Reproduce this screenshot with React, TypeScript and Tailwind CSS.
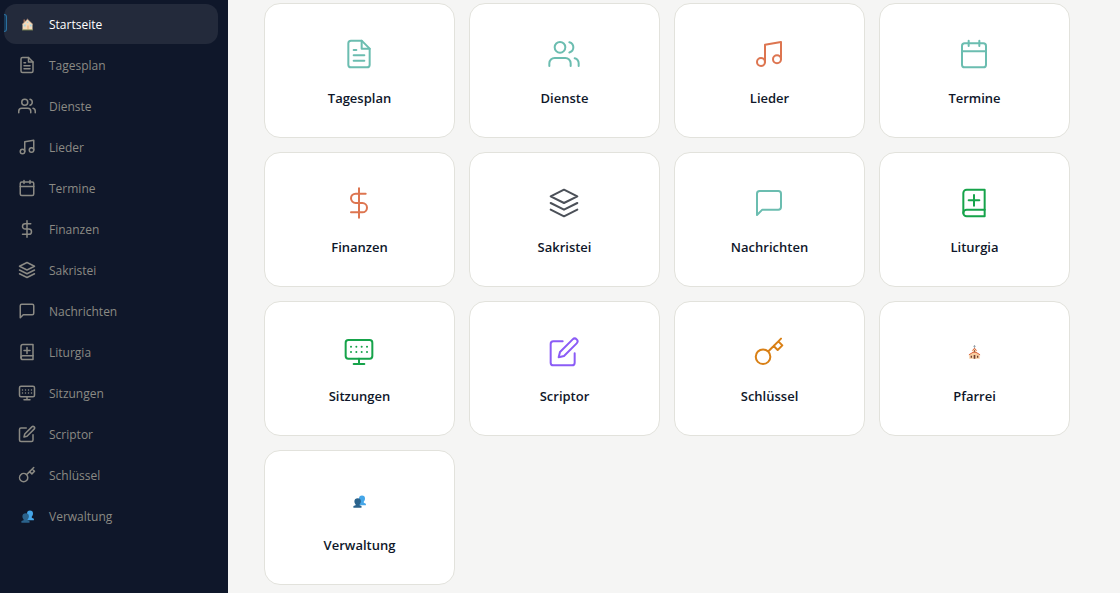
import type { ComponentType, ReactNode } from 'react';

type IconProps = { className?: string };

const Line = ({ className, children }: { className?: string; children: ReactNode }) => (
  <svg
    viewBox="0 0 24 24"
    fill="none"
    stroke="currentColor"
    strokeLinecap="round"
    strokeLinejoin="round"
    aria-hidden="true"
    className={className}
  >
    {children}
  </svg>
);

const FileIcon = ({ className }: IconProps) => (
  <Line className={className}>
    <path d="M14 2H6a2 2 0 0 0-2 2v16a2 2 0 0 0 2 2h12a2 2 0 0 0 2-2V8z" />
    <path d="M14 2v6h6M16 13H8M16 17H8M10 9H8" />
  </Line>
);

const UsersIcon = ({ className }: IconProps) => (
  <Line className={className}>
    <path d="M17 21v-2a4 4 0 0 0-4-4H5a4 4 0 0 0-4 4v2" />
    <circle cx="9" cy="7" r="4" />
    <path d="M23 21v-2a4 4 0 0 0-3-3.87M16 3.13a4 4 0 0 1 0 7.75" />
  </Line>
);

const MusicIcon = ({ className }: IconProps) => (
  <Line className={className}>
    <path d="M9 18V5l12-2v13" />
    <circle cx="6" cy="18" r="3" />
    <circle cx="18" cy="16" r="3" />
  </Line>
);

const CalendarIcon = ({ className }: IconProps) => (
  <Line className={className}>
    <rect x="3" y="4" width="18" height="18" rx="2" />
    <path d="M16 2v4M8 2v4M3 10h18" />
  </Line>
);

const DollarIcon = ({ className }: IconProps) => (
  <Line className={className}>
    <path d="M12 1v22M17 5H9.5a3.5 3.5 0 0 0 0 7h5a3.5 3.5 0 0 1 0 7H6" />
  </Line>
);

const LayersIcon = ({ className }: IconProps) => (
  <Line className={className}>
    <path d="M12 2 2 7l10 5 10-5-10-5zM2 17l10 5 10-5M2 12l10 5 10-5" />
  </Line>
);

const MessageIcon = ({ className }: IconProps) => (
  <Line className={className}>
    <path d="M21 15a2 2 0 0 1-2 2H7l-4 4V5a2 2 0 0 1 2-2h14a2 2 0 0 1 2 2z" />
  </Line>
);

const BookIcon = ({ className }: IconProps) => (
  <Line className={className}>
    <path d="M4 19.5A2.5 2.5 0 0 1 6.5 17H20" />
    <path d="M6.5 2H20v20H6.5A2.5 2.5 0 0 1 4 19.5v-15A2.5 2.5 0 0 1 6.5 2z" />
    <path d="M12 6v8M8 10h8" />
  </Line>
);

const MonitorIcon = ({ className }: IconProps) => (
  <Line className={className}>
    <rect x="2" y="3" width="20" height="14" rx="2" />
    <path d="M8 21h8M12 17v4" />
    <path d="M6 8h.01M10 8h.01M14 8h.01M18 8h.01M6 12h.01M10 12h.01M14 12h.01M18 12h.01" />
  </Line>
);

const EditIcon = ({ className }: IconProps) => (
  <Line className={className}>
    <path d="M11 4H4a2 2 0 0 0-2 2v14a2 2 0 0 0 2 2h14a2 2 0 0 0 2-2v-7" />
    <path d="M18.5 2.5a2.121 2.121 0 0 1 3 3L12 15l-4 1 1-4 9.5-9.5z" />
  </Line>
);

const KeyIcon = ({ className }: IconProps) => (
  <Line className={className}>
    <path d="M21 2l-2 2m-7.61 7.61a5.5 5.5 0 1 1-7.778 7.778 5.5 5.5 0 0 1 7.777-7.777zm0 0L15.5 7.5m0 0l3 3L22 7l-3-3m-3.5 3.5L19 4" />
  </Line>
);

const HouseEmoji = () => (
  <svg viewBox="0 0 13 13" aria-hidden="true" className="size-[13px]">
    <path d="M2.5 1.5H4v3H2.5z" fill="#9b6a55" />
    <path d="M1.5 6l5-4.8 5 4.8v6h-10z" fill="#f6d9b8" />
    <path d="M1 6.6l5.5-5.4L12 6.6" fill="none" stroke="#c9a08a" strokeWidth=".7" />
    <path d="M2.8 6.6h2v2h-2zM8.8 6.6h1.8v2H8.8zM5.8 3.6h1.5v1.5H5.8z" fill="#a9d6e0" />
    <path d="M6 7.5h2v4H6z" fill="#f0c298" />
    <path d="M1 11.4h11v1H1z" fill="#7d8a56" />
  </svg>
);

const ChurchEmoji = () => (
  <svg viewBox="0 0 13 14" aria-hidden="true" className="h-[14px] w-[13px]">
    <path d="M6.5 0v4M5.3 1.4h2.4" fill="none" stroke="#8f9aa3" strokeWidth=".8" />
    <path d="M1.3 9.5l3.5-2V5l1.7-1.8L8.2 5v2.5l3.5 2v4.2H1.3z" fill="#f8cfa2" />
    <path d="M4.4 5.6l2.1-2.4 2.1 2.4M.9 9.8L5 7.3h3l4.1 2.5" fill="none" stroke="#d9653f" />
    <path d="M6 5.3h1v1.5H6zM2.7 10.7H4v2H2.7zM9 10.7h1.3v2H9zM5.7 10h1.6v3.7H5.7z" fill="#6d4034" />
  </svg>
);

const PeopleEmoji = () => (
  <svg viewBox="0 0 13 13" aria-hidden="true" className="size-[13px]">
    <path d="M9 .5c2 0 3 1.2 3 3 0 1.5-.5 2.4-1.2 3v1.2l2.1 1v1.5H6V3.5C6 1.7 7 .5 9 .5z" fill="#45a6e8" />
    <path d="M4.8 3.2c2 0 3.1 1.2 3.1 3 0 1.4-.6 2.4-1.3 3v1l1.9.9v1.6H.4v-1.600l2.2-.9v-1c-.7-.6-1.2-1.6-1.2-3 0-1.8 1.3-3 3.4-3z" fill="#2b638c" />
  </svg>
);

type Entry = {
  label: string;
  icon: ComponentType<IconProps>;
  color?: string;
};

const modules: Entry[] = [
  { label: 'Tagesplan', icon: FileIcon, color: 'text-[#6bbdb0]' },
  { label: 'Dienste', icon: UsersIcon, color: 'text-[#6bbdb0]' },
  { label: 'Lieder', icon: MusicIcon, color: 'text-[#dd7550]' },
  { label: 'Termine', icon: CalendarIcon, color: 'text-[#6bbdb0]' },
  { label: 'Finanzen', icon: DollarIcon, color: 'text-[#dd7550]' },
  { label: 'Sakristei', icon: LayersIcon, color: 'text-[#4b5058]' },
  { label: 'Nachrichten', icon: MessageIcon, color: 'text-[#6bbdb0]' },
  { label: 'Liturgia', icon: BookIcon, color: 'text-[#16a34a]' },
  { label: 'Sitzungen', icon: MonitorIcon, color: 'text-[#16a34a]' },
  { label: 'Scriptor', icon: EditIcon, color: 'text-[#8b5cf6]' },
  { label: 'Schlüssel', icon: KeyIcon, color: 'text-[#d98016]' },
  { label: 'Pfarrei', icon: ChurchEmoji },
  { label: 'Verwaltung', icon: PeopleEmoji },
];

const navItems: Entry[] = [
  { label: 'Startseite', icon: HouseEmoji },
  ...modules.filter((m) => m.label !== 'Pfarrei'),
];

const Sidebar = () => (
  <aside className="w-[228px] shrink-0 bg-[#0f172a] pt-1 pr-2.5 pl-1">
    <nav>
      <ul className="flex flex-col gap-px">
        {navItems.map(({ label, icon: Icon }, i) => (
          <li key={label} className="relative">
            {i === 0 && (
              <span className="absolute top-2.5 left-0 h-[18px] w-[3px] rounded-r-sm border border-l-0 border-[#2b6f9e] bg-[#173a5a]" />
            )}
            <a
              href="#"
              aria-current={i === 0 ? 'page' : undefined}
              className={`flex h-10 items-center gap-[13px] rounded-xl px-3.5 text-xs leading-5 ${
                i === 0 ? 'bg-[#232a3b] text-white' : 'text-[#8b8a84]'
              }`}
            >
              <span className="flex w-[18px] justify-center">
                <Icon className="size-[18px] stroke-2" />
              </span>
              <span className="pt-0.5">{label}</span>
            </a>
          </li>
        ))}
      </ul>
    </nav>
  </aside>
);

const App = () => {
  return (
    <div className="flex min-h-screen bg-[#f5f5f4] font-['Open_Sans','Noto_Sans',sans-serif]">
      <Sidebar />
      <main className="flex-1 pt-[3px] pr-[50px] pb-[7px] pl-9">
        <div className="grid grid-cols-4 gap-3.5">
          {modules.map(({ label, icon: Icon, color }) => (
            <a
              key={label}
              href="#"
              className="flex flex-col items-center gap-[18px] rounded-2xl border border-[#e2e2dc] bg-white pt-[34px] pb-[29px] text-[13px] leading-5 font-semibold text-[#0f172a]"
            >
              <span className={`flex h-8 w-[33px] items-center ${color ? color : 'justify-center'}`}>
                <Icon className="size-8 stroke-[1.5]" />
              </span>
              {label}
            </a>
          ))}
        </div>
      </main>
    </div>
  );
};

export default App;
